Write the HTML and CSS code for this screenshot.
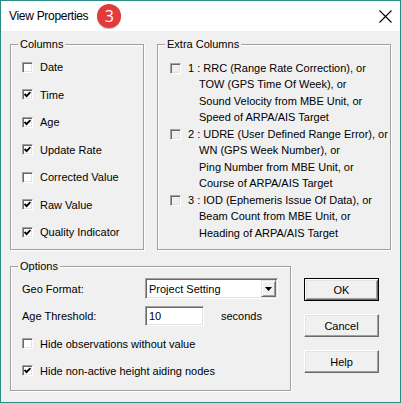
FILE: index.html
```html
<!DOCTYPE html>
<html>
  <head>
    <title>View Properties</title>
    <link rel="stylesheet" href="styles.css">
  </head>
  <body>
    <div class="window">
      <div class="titlebar">
        <span class="title">View Properties</span>
        <span class="badge">3</span>
        <svg class="close" width="13" height="13" viewBox="0 0 13 13">
          <path d="M0.5 0.5L12.5 12.5M12.5 0.5L0.5 12.5" stroke="#000" stroke-width="1.1" fill="none"/>
        </svg>
      </div>

      <div class="dialog">
        <div class="top-row">
          <fieldset class="group columns">
            <legend>Columns</legend>
            <div class="col-list">
              <div class="check-row"><span class="cb"></span>Date</div>
              <div class="check-row"><span class="cb"><svg class="tick" viewBox="0 0 7 7"><path d="M0.6 3L2.6 5.1L6.4 1.1"/></svg></span>Time</div>
              <div class="check-row"><span class="cb"><svg class="tick" viewBox="0 0 7 7"><path d="M0.6 3L2.6 5.1L6.4 1.1"/></svg></span>Age</div>
              <div class="check-row"><span class="cb"><svg class="tick" viewBox="0 0 7 7"><path d="M0.6 3L2.6 5.1L6.4 1.1"/></svg></span>Update Rate</div>
              <div class="check-row"><span class="cb"></span>Corrected Value</div>
              <div class="check-row"><span class="cb"><svg class="tick" viewBox="0 0 7 7"><path d="M0.6 3L2.6 5.1L6.4 1.1"/></svg></span>Raw Value</div>
              <div class="check-row"><span class="cb"><svg class="tick" viewBox="0 0 7 7"><path d="M0.6 3L2.6 5.1L6.4 1.1"/></svg></span>Quality Indicator</div>
            </div>
          </fieldset>

          <fieldset class="group extra">
            <legend>Extra Columns</legend>
            <div class="extra-list">
              <div class="extra-item">
                <span class="cb dim"></span>
                <div class="extra-text">1 : RRC (Range Rate Correction), or<br>TOW (GPS Time Of Week), or<br>Sound Velocity from MBE Unit, or<br>Speed of ARPA/AIS Target</div>
              </div>
              <div class="extra-item">
                <span class="cb dim"></span>
                <div class="extra-text">2 : UDRE (User Defined Range Error), or<br>WN (GPS Week Number), or<br>Ping Number from MBE Unit, or<br>Course of ARPA/AIS Target</div>
              </div>
              <div class="extra-item">
                <span class="cb dim"></span>
                <div class="extra-text">3 : IOD (Ephemeris Issue Of Data), or<br>Beam Count from MBE Unit, or<br>Heading of ARPA/AIS Target</div>
              </div>
            </div>
          </fieldset>
        </div>

        <div class="bottom-row">
          <fieldset class="group options">
            <legend>Options</legend>
            <div class="opt-list">
              <div class="field-row geo">
                <span class="field-label">Geo Format:</span>
                <div class="combo">
                  <span class="combo-value">Project Setting</span>
                  <span class="combo-btn"><svg width="7" height="4" viewBox="0 0 7 4"><path d="M0 0H7L3.5 4Z" fill="#000"/></svg></span>
                </div>
              </div>
              <div class="field-row">
                <span class="field-label">Age Threshold:</span>
                <div class="textbox">10</div>
                <span class="unit">seconds</span>
              </div>
              <div class="check-row opt-check"><span class="cb"></span>Hide observations without value</div>
              <div class="check-row"><span class="cb"><svg class="tick" viewBox="0 0 7 7"><path d="M0.6 3L2.6 5.1L6.4 1.1"/></svg></span>Hide non-active height aiding nodes</div>
            </div>
          </fieldset>

          <div class="buttons">
            <button class="btn default">OK</button>
            <button class="btn">Cancel</button>
            <button class="btn">Help</button>
          </div>
        </div>
      </div>
    </div>
  </body>
</html>
```

FILE: styles.css
```css
* {
  box-sizing: border-box;
}
body {
  margin: 0;
  background: #fff;
  font-family: "Liberation Sans", Arial, sans-serif;
  font-size: 11px;
  color: #000;
}
.window {
  width: 401px;
  height: 403px;
  border: 1px solid #2a8b87;
  background: #f0f0f0;
  display: flex;
  flex-direction: column;
}

/* title bar */
.titlebar {
  flex: none;
  height: 30px;
  background: #fff;
  display: flex;
  align-items: center;
  padding-left: 8px;
  padding-right: 8px;
}
.title {
  font-size: 12px;
  letter-spacing: -0.3px;
}
.badge {
  width: 24px;
  height: 24px;
  margin-left: 9px;
  border-radius: 50%;
  background: #e23b3b;
  box-shadow: 0 1px 1px rgba(120, 0, 0, 0.35);
  color: #fff;
  font-family: "Open Sans", "Liberation Sans", sans-serif;
  font-size: 16px;
  display: flex;
  align-items: center;
  justify-content: center;
}
.close {
  margin-left: auto;
}

/* dialog body */
.dialog {
  flex: 1;
  padding: 7px 9px 11px 9px;
}
.top-row {
  display: flex;
  gap: 13px;
  height: 212px;
}
.bottom-row {
  display: flex;
  margin-top: 10px;
  height: 131px;
}
.group {
  margin: 0;
  padding: 0;
  min-width: 0;
  border: 1px solid #a0a0a0;
  box-shadow: inset 1px 1px #fff, 1px 1px #fff;
}
.group legend {
  margin-left: 7px;
  padding: 0 2px;
  line-height: 13px;
  background: #f0f0f0;
}
.columns {
  width: 134px;
}
.extra {
  width: 234px;
}
.options {
  width: 281px;
}

/* checkboxes */
.check-row {
  display: flex;
  align-items: center;
  gap: 7px;
  height: 27.5px;
  white-space: nowrap;
}
.cb {
  flex: none;
  width: 11px;
  height: 11px;
  background: #fff;
  border: 1px solid;
  border-color: #a0a0a0 #fff #fff #a0a0a0;
  box-shadow: inset 1px 1px #696969, inset -1px -1px #e3e3e3;
  display: flex;
  align-items: center;
  justify-content: center;
}
.cb.dim {
  background: #efefef;
}
.tick {
  width: 7px;
  height: 7px;
  fill: none;
  stroke: #000;
  stroke-width: 1.9;
}

.col-list {
  padding: 2.5px 0 0 11px;
}

.extra-list {
  padding: 8.75px 0 0 12px;
}
.extra-item {
  display: flex;
  align-items: flex-start;
  gap: 7px;
  line-height: 16.5px;
}
.extra-item .cb {
  margin-top: 3px;
}
.extra-text {
  padding-left: 11px;
  text-indent: -11px;
  white-space: nowrap;
}

/* options */
.opt-list {
  padding: 5px 0 0 11px;
}
.field-row {
  display: flex;
  align-items: center;
}
.field-row.geo {
  margin-bottom: 7px;
}
.field-label {
  width: 123px;
}
.combo,
.textbox {
  background: #fff;
  border: 1px solid;
  border-color: #a0a0a0 #fff #fff #a0a0a0;
  box-shadow: inset 1px 1px #696969, inset -1px -1px #e3e3e3;
  padding: 1px;
}
.combo {
  width: 133px;
  height: 21px;
  display: flex;
  align-items: center;
  justify-content: space-between;
}
.combo-value {
  margin-left: 2px;
}
.combo-btn {
  width: 15px;
  height: 17px;
  background: #f0f0f0;
  border: 1px solid;
  border-color: #e3e3e3 #696969 #696969 #e3e3e3;
  box-shadow: inset 1px 1px #fff, inset -1px -1px #a0a0a0;
  display: flex;
  align-items: center;
  justify-content: center;
}
.textbox {
  width: 59px;
  height: 20px;
  line-height: 16px;
  padding-left: 3px;
}
.unit {
  margin-left: 17px;
}
.opt-check {
  margin-top: 4px;
  height: 27px;
}
.opt-list .check-row {
  height: 27px;
}

/* buttons */
.buttons {
  margin-left: 13px;
  padding-top: 18px;
  display: flex;
  flex-direction: column;
  gap: 13px;
}
.btn {
  width: 75px;
  height: 23px;
  padding: 0;
  background: #f0f0f0;
  font-family: "Liberation Sans", Arial, sans-serif;
  font-size: 11px;
  color: #000;
  border: 1px solid;
  border-color: #fff #696969 #696969 #fff;
  box-shadow: inset -1px -1px #a0a0a0, inset 1px 1px #e3e3e3;
}
.btn.default {
  border-color: #000;
  box-shadow: inset 1px 1px #fff, inset -1px -1px #696969, inset 2px 2px #e3e3e3, inset -2px -2px #a0a0a0;
}
```
